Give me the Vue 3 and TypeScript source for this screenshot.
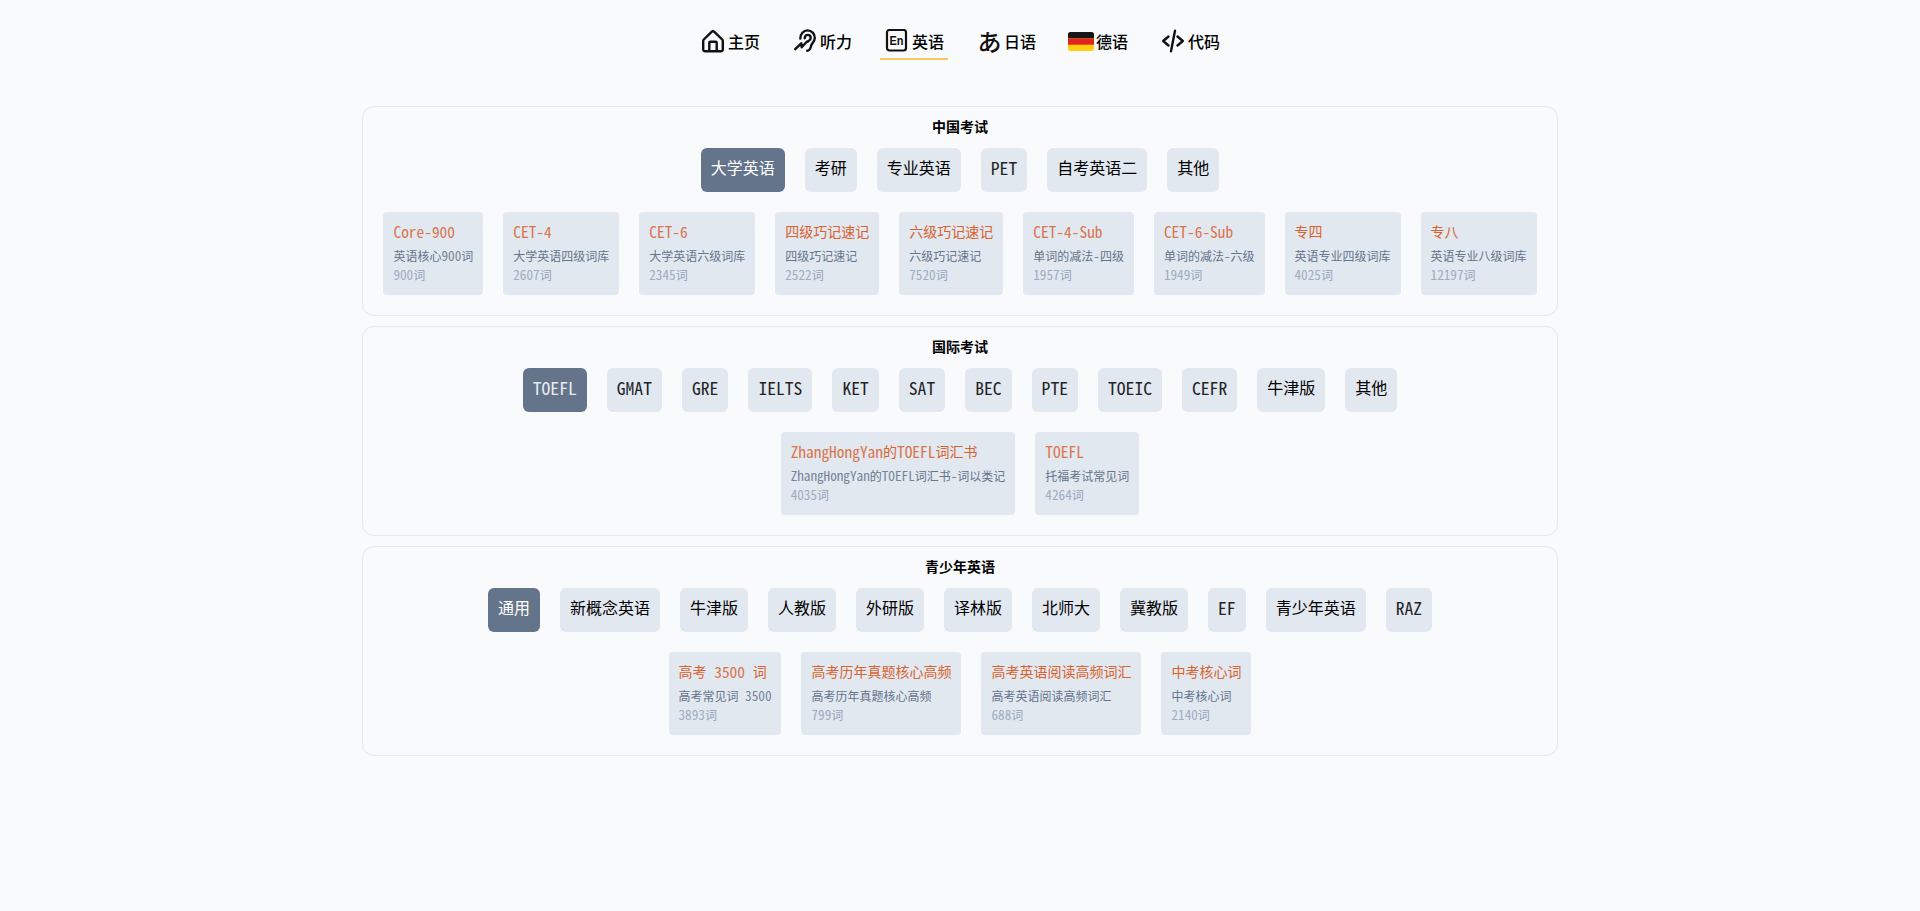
<script setup lang="ts">
interface Run { t: string; latin: boolean }
interface Card { title: string; desc: string; count: string }
interface Section { name: string; tabs: string[]; cards: Card[] }

const runs = (text: string): Run[] =>
  text
    .split(/([\x00-\x7f]+)/)
    .filter((t) => t.length > 0)
    .map((t) => ({ t, latin: /^[\x00-\x7f]/.test(t) }))

const nav = ['home', 'ear', 'en', 'ja', 'de', 'code']
const navLabels: Record<string, string> = {
  home: '主页', ear: '听力', en: '英语', ja: '日语', de: '德语', code: '代码',
}

const sections: Section[] = [
  {
    name: '中国考试',
    tabs: ['大学英语', '考研', '专业英语', 'PET', '自考英语二', '其他'],
    cards: [
      { title: 'Core-900', desc: '英语核心900词', count: '900词' },
      { title: 'CET-4', desc: '大学英语四级词库', count: '2607词' },
      { title: 'CET-6', desc: '大学英语六级词库', count: '2345词' },
      { title: '四级巧记速记', desc: '四级巧记速记', count: '2522词' },
      { title: '六级巧记速记', desc: '六级巧记速记', count: '7520词' },
      { title: 'CET-4-Sub', desc: '单词的减法-四级', count: '1957词' },
      { title: 'CET-6-Sub', desc: '单词的减法-六级', count: '1949词' },
      { title: '专四', desc: '英语专业四级词库', count: '4025词' },
      { title: '专八', desc: '英语专业八级词库', count: '12197词' },
    ],
  },
  {
    name: '国际考试',
    tabs: ['TOEFL', 'GMAT', 'GRE', 'IELTS', 'KET', 'SAT', 'BEC', 'PTE', 'TOEIC', 'CEFR', '牛津版', '其他'],
    cards: [
      { title: 'ZhangHongYan的TOEFL词汇书', desc: 'ZhangHongYan的TOEFL词汇书-词以类记', count: '4035词' },
      { title: 'TOEFL', desc: '托福考试常见词', count: '4264词' },
    ],
  },
  {
    name: '青少年英语',
    tabs: ['通用', '新概念英语', '牛津版', '人教版', '外研版', '译林版', '北师大', '冀教版', 'EF', '青少年英语', 'RAZ'],
    cards: [
      { title: '高考 3500 词', desc: '高考常见词 3500', count: '3893词' },
      { title: '高考历年真题核心高频', desc: '高考历年真题核心高频', count: '799词' },
      { title: '高考英语阅读高频词汇', desc: '高考英语阅读高频词汇', count: '688词' },
      { title: '中考核心词', desc: '中考核心词', count: '2140词' },
    ],
  },
]
</script>

<template>
  <div class="page">
    <nav class="nav">
      <a v-for="key in nav" :key="key" class="nav-item" :class="{ active: key === 'en' }">
        <span class="icon">
          <svg v-if="key === 'home'" viewBox="0 0 24 24" width="24" height="24" fill="none" stroke="#111" stroke-width="2.400" stroke-linejoin="round">
            <path d="M3.800 10.500 11.600 2.900a2 2 0 0 1 2.800 0l7.800 7.600a2 2 0 0 1 .6 1.400v8.500a1.800 1.800 0 0 1-1.800 1.800H5a1.800 1.800 0 0 1-1.800-1.800v-8.500a2 2 0 0 1 .6-1.400Z" />
            <path d="M9.300 22.200V13.700a1 1 0 0 1 1-1h5.400a1 1 0 0 1 1 1v8.500" />
          </svg>
          <svg v-else-if="key === 'ear'" viewBox="0 0 24 24" width="24" height="24" fill="none" stroke="#111" stroke-width="2.400" stroke-linecap="round" stroke-linejoin="round">
            <path d="M8.300 9.500C8.300 4.800 11.500 1.400 15.500 1.400c4.300 0 7.300 3.300 7.300 7.300 0 3.600-2.500 5-3.400 7.300-.8 2.100-.8 5.800-4.200 5.800" />
            <path d="M12.700 9.200c.2-2 1.400-3.300 3-3.300 1.700 0 3 1.300 3 3 0 2-1.800 2.500-2.900 3.800" />
            <path d="M3.200 20.200 9.300 14.300l.4 4 5.300-5.800" />
          </svg>
          <svg v-else-if="key === 'en'" viewBox="0 0 24 24" width="24" height="24" fill="none">
            <rect x="3" y="1" width="19" height="20.500" rx="2.500" stroke="#111" stroke-width="2.200" />
            <text x="12.500" y="16" text-anchor="middle" class="en-text" textLength="14" lengthAdjust="spacingAndGlyphs">En</text>
          </svg>
          <span v-else-if="key === 'ja'" class="ja-glyph">あ</span>
          <svg v-else-if="key === 'de'" class="flag" viewBox="0 0 26 19" width="26" height="19">
            <rect width="26" height="19" rx="2.500" fill="#ffcf0f" />
            <path d="M0 6.300V2.500A2.500 2.500 0 0 1 2.500 0h21A2.500 2.500 0 0 1 26 2.500v3.800Z" fill="#141414" />
            <rect y="6.300" width="26" height="6.400" fill="#dd2622" />
          </svg>
          <svg v-else viewBox="0 0 24 24" width="24" height="24" fill="none" stroke="#111" stroke-width="2.400" stroke-linecap="round" stroke-linejoin="round">
            <path d="M8.500 7.500 3.200 12l5.300 4.500" />
            <path d="M17.500 7.500l5.300 4.500-5.300 4.500" />
            <path d="M15 1.800 11 22.200" />
          </svg>
        </span>
        <span class="nav-label">{{ navLabels[key] }}</span>
      </a>
    </nav>

    <main class="sections">
      <section v-for="s in sections" :key="s.name" class="section">
        <h2 class="section-title">{{ s.name }}</h2>
        <div class="tabs">
          <button v-for="(tab, i) in s.tabs" :key="tab" class="tab" :class="{ selected: i === 0 }" type="button">
            <span v-for="(r, k) in runs(tab)" :key="k" :class="{ latin: r.latin }">{{ r.t }}</span>
          </button>
        </div>
        <div class="cards">
          <div v-for="c in s.cards" :key="c.title" class="card">
            <div class="card-title"><span v-for="(r, k) in runs(c.title)" :key="k" :class="{ latin: r.latin }">{{ r.t }}</span></div>
            <div class="card-desc"><span v-for="(r, k) in runs(c.desc)" :key="k" :class="{ latin: r.latin }">{{ r.t }}</span></div>
            <div class="card-count"><span v-for="(r, k) in runs(c.count)" :key="k" :class="{ latin: r.latin }">{{ r.t }}</span></div>
          </div>
        </div>
      </section>
    </main>
  </div>
</template>

<style>
html, body { background: #f8fafc; }
</style>

<style scoped>
.page {
  min-height: 911px;
  background: #f8fafc;
  color: #000;
  font-family: "Noto Sans CJK SC", "Noto Sans", sans-serif;
  box-sizing: border-box;
}
.nav {
  display: flex;
  justify-content: center;
  gap: 24px;
  padding-top: 24px;
  height: 36px;
  margin-bottom: 46px;
}
.nav-item {
  display: flex;
  align-items: center;
  gap: 4px;
  padding: 0 4px;
  box-sizing: border-box;
  height: 36px;
  border-bottom: 2px solid transparent;
}
.nav-item.active {
  border-bottom-color: #fbc75f;
}
.icon {
  width: 24px;
  height: 24px;
  display: flex;
  align-items: center;
  justify-content: center;
}
.icon svg { display: block; flex: none; }
.flag { margin-left: 2px; }
.ja-glyph {
  font-family: "Noto Sans CJK JP", sans-serif;
  font-size: 24px;
  font-weight: 500;
  line-height: 24px;
  color: #111;
  margin-left: 3px;
}
.en-text {
  font-family: "Liberation Sans", sans-serif;
  font-size: 12px;
  font-weight: 700;
  fill: #111;
}
.nav-label {
  font-size: 16px;
  font-weight: 500;
  line-height: 24px;
  padding-bottom: 1px;
}
.sections {
  display: flex;
  flex-direction: column;
  gap: 10px;
  width: 1196px;
  margin: 0 auto;
}
.section {
  box-sizing: border-box;
  height: 210px;
  border: 1px solid #e2e8f0;
  border-radius: 12px;
  padding: 9px 20px 20px;
  display: flex;
  flex-direction: column;
  align-items: center;
}
.section-title {
  margin: 0 0 12px;
  font-size: 14px;
  line-height: 20px;
  font-weight: 700;
  text-align: center;
}
.tabs {
  display: flex;
  justify-content: center;
  gap: 20px;
}
.tab {
  border: 0;
  margin: 0;
  background: #e2e8f0;
  color: #000;
  font-family: inherit;
  font-size: 16px;
  line-height: 24px;
  height: 44px;
  padding: 7px 10px 13px;
  border-radius: 6px;
  white-space: pre;
}
.tab.selected {
  background: #64748b;
  color: #fff;
}
.latin {
  font-family: "Noto Sans Mono CJK SC", "DejaVu Sans Mono", monospace;
  font-size: 1.1em;
  line-height: 0;
  white-space: pre;
  opacity: 0.85;
}
.tab .latin,
.card-title .latin {
  vertical-align: -1px;
}
.cards {
  display: flex;
  justify-content: center;
  gap: 20px;
  margin-top: 20px;
}
.card {
  background: #e2e8f0;
  border-radius: 4px;
  padding: 9px 10px;
  height: 83px;
  box-sizing: border-box;
  white-space: nowrap;
}
.card-title {
  font-size: 14px;
  line-height: 20px;
  color: #d9622f;
}
.card-desc {
  margin-top: 6px;
  font-size: 12px;
  line-height: 18px;
  color: #64748b;
}
.card-count {
  margin-top: 1px;
  font-size: 12px;
  line-height: 18px;
  color: #94a3b8;
}
</style>
